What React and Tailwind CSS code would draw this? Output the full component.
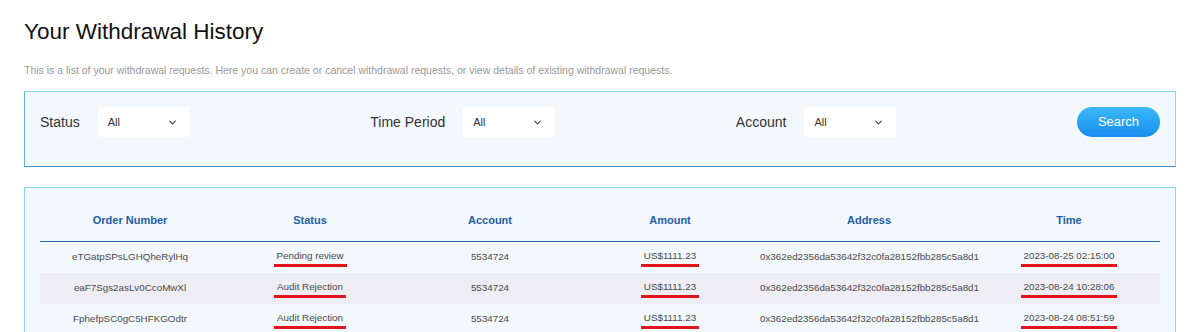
import React from "react";
import { ChevronDown } from "lucide-react";

const rows = [
  { order: "eTGatpSPsLGHQheRylHq", status: "Pending review", account: "5534724", amount: "US$1111.23", address: "0x362ed2356da53642f32c0fa28152fbb285c5a8d1", time: "2023-08-25 02:15:00" },
  { order: "eaF7Sgs2asLv0CcoMwXl", status: "Audit Rejection", account: "5534724", amount: "US$1111.23", address: "0x362ed2356da53642f32c0fa28152fbb285c5a8d1", time: "2023-08-24 10:28:06" },
  { order: "FphefpSC0gC5HFKGOdtr", status: "Audit Rejection", account: "5534724", amount: "US$1111.23", address: "0x362ed2356da53642f32c0fa28152fbb285c5a8d1", time: "2023-08-24 08:51:59" },
];

function Select() {
  return (
    <div className="flex h-[30px] w-[92px] items-center justify-between rounded-[3px] bg-white pl-[10px] pr-[12px]">
      <span className="text-[11px] text-[#333]">All</span>
      <ChevronDown size={11} strokeWidth={2.6} className="text-[#444]" />
    </div>
  );
}

function Marked({ children }) {
  return (
    <span className="inline-block border-b-[3px] border-[#e3141b] px-[3px] pb-[1px] leading-[14px]">{children}</span>
  );
}

const cols = ["w-[180px]", "w-[180px]", "w-[180px]", "w-[180px]", "w-[218px]", "flex-1"];

export default function App() {
  return (
    <div className="h-[332px] w-[1188px] overflow-hidden bg-white" style={{ fontFamily: '"Liberation Sans", Arial, sans-serif' }}>
      <div className="pl-[24px] pr-[12px] pt-[18px]">
        <h1 className="text-[22.5px] leading-[28px] text-[#111]">Your Withdrawal History</h1>
        <p className="mt-[17px] text-[10.5px] leading-[14px] text-[#999]">
          This is a list of your withdrawal requests. Here you can create or cancel withdrawal requests, or view details of existing withdrawal requests.
        </p>

        <div className="mt-[14px] flex h-[76px] items-start justify-between border border-[#86d8ee] border-b-[#3b8fd2] border-l-[#5fb3e2] bg-[#f3f8fd] px-[15px] pt-[15px]">
          <div className="flex items-center gap-[18px]">
            <span className="text-[14px] text-[#333]">Status</span>
            <Select />
          </div>
          <div className="flex items-center gap-[18px]">
            <span className="text-[14px] text-[#333]">Time Period</span>
            <Select />
          </div>
          <div className="flex items-center gap-[18px]">
            <span className="text-[14px] text-[#333]">Account</span>
            <Select />
          </div>
          <button className="h-[30px] w-[83px] rounded-full bg-gradient-to-b from-[#3cbaf7] to-[#168df0] text-[13px] text-white">
            Search
          </button>
        </div>

        <div className="mt-[20px] border border-[#86d8ee] bg-[#f3f8fd] px-[15px] pt-[11px]">
          <div className="flex h-[43px] items-center border-b border-[#2566a8] text-[11px] font-bold text-[#1f5ea6]">
            {["Order Number", "Status", "Account", "Amount", "Address", "Time"].map((h, i) => (
              <div key={h} className={`${cols[i]} text-center`}>{h}</div>
            ))}
          </div>
          {rows.map((r, idx) => (
            <div key={idx} className={`flex h-[31px] items-center text-[9.8px] text-[#4a4a4a] ${idx % 2 === 1 ? "bg-[#efedf4]" : ""}`}>
              <div className={`${cols[0]} text-center`}>{r.order}</div>
              <div className={`${cols[1]} text-center`}><Marked>{r.status}</Marked></div>
              <div className={`${cols[2]} text-center`}>{r.account}</div>
              <div className={`${cols[3]} text-center`}><Marked>{r.amount}</Marked></div>
              <div className={`${cols[4]} text-center`}>{r.address}</div>
              <div className={`${cols[5]} text-center`}><Marked>{r.time}</Marked></div>
            </div>
          ))}
        </div>
      </div>
    </div>
  );
}
